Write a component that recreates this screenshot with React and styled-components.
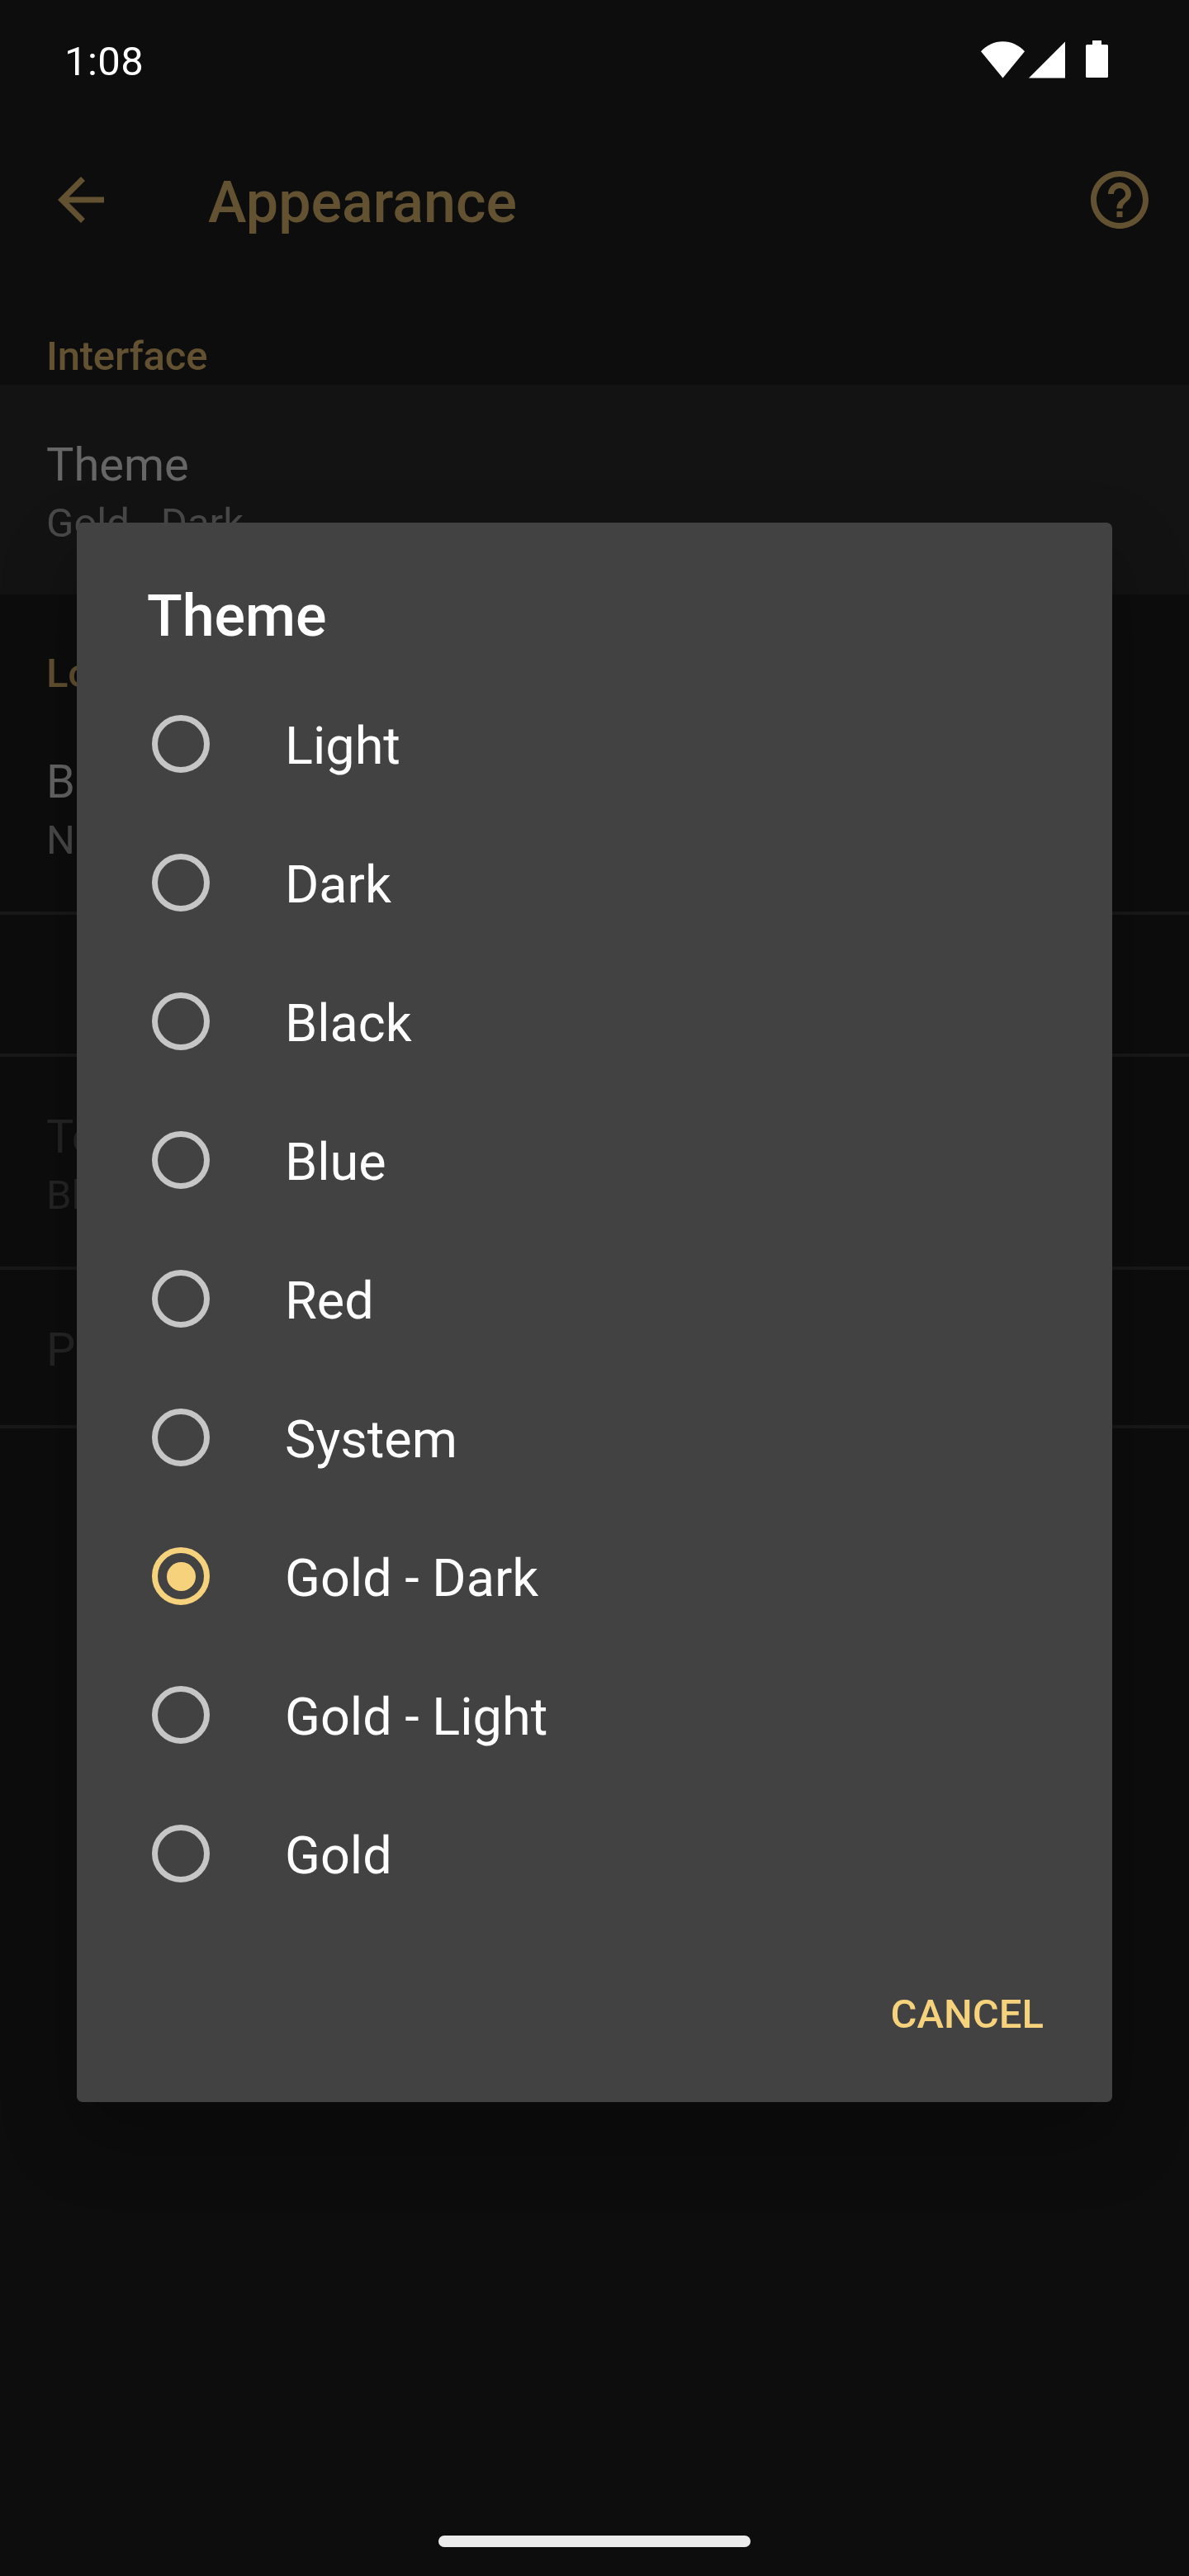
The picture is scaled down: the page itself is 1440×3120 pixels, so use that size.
import React, { useState } from "react";
import styled, { createGlobalStyle } from "styled-components";

const GlobalStyle = createGlobalStyle`
  * { box-sizing: border-box; }
  body { margin: 0; background: #0d0d0d; }
`;

const Screen = styled.div`
  position: relative;
  display: flex;
  flex-direction: column;
  width: 1440px;
  height: 3120px;
  overflow: hidden;
  background: #0d0d0d;
  font-family: Roboto, "Liberation Sans", sans-serif;
`;

const StatusBar = styled.header`
  display: flex;
  justify-content: space-between;
  height: 148px;
  padding: 46px 98px 0 78px;
`;

const Clock = styled.time`
  color: #fff;
  font-size: 49px;
  line-height: 57px;
  letter-spacing: 0.4px;
`;

const StatusIcons = styled.div`
  display: flex;
  align-items: flex-start;
  padding-top: 3px;
  svg { display: block; fill: #fff; }
  svg + svg { margin-left: 5px; }
  svg + svg:last-child { margin-left: 25px; }
`;

const AppBar = styled.div`
  display: flex;
  align-items: center;
  height: 188px;
  padding: 0 42px 0 56px;
  color: #635231;
  svg { display: block; fill: currentColor; }
`;

const AppTitle = styled.h1`
  flex: 1;
  margin: 0;
  padding: 6px 0 0 112px;
  font-size: 70px;
  font-weight: 500;
  line-height: 82px;
`;

const Preferences = styled.main`
  display: flex;
  flex: 1;
  flex-direction: column;
`;

const SectionHeader = styled.h2`
  height: 130px;
  margin: 0;
  padding: 67px 56px 0;
  color: #635231;
  font-size: 49px;
  font-weight: 500;
  line-height: 57px;
  letter-spacing: -0.2px;
`;

const Preference = styled.div`
  height: ${(p) => (p.$single ? 188 : 254)}px;
  padding: 64px 56px 0;
  background: ${(p) => (p.$pressed ? "#131313" : "transparent")};
  color: ${(p) => (p.$disabled ? "#252525" : "#666")};
`;

const PreferenceTitle = styled.div`
  font-size: 56px;
  line-height: 66px;
`;

const PreferenceSummary = styled.div`
  margin-top: 9px;
  color: ${(p) => (p.$disabled ? "#252525" : "#494949")};
  font-size: 49px;
  line-height: 57px;
`;

const Divider = styled.hr`
  width: 100%;
  height: 4px;
  margin: 0;
  border: 0;
  background: #191919;
`;

const Spacer = styled.div`
  height: 168px;
`;

const NavBar = styled.footer`
  display: flex;
  justify-content: center;
  height: 49px;
`;

const NavHandle = styled.div`
  width: 378px;
  height: 14px;
  border-radius: 7px;
  background: #ebebeb;
`;

const Dialog = styled.section`
  position: absolute;
  top: 633px;
  left: 93px;
  display: flex;
  flex-direction: column;
  width: 1254px;
  height: 1913px;
  padding-top: 72px;
  border-radius: 7px;
  background: #424242;
  box-shadow: 0 40px 90px rgba(0, 0, 0, 0.28);
`;

const DialogTitle = styled.h2`
  margin: 0 84px 30px 85px;
  color: #fff;
  font-size: 70px;
  font-weight: 500;
  line-height: 82px;
`;

const OptionList = styled.div`
  display: flex;
  flex-direction: column;
`;

const Option = styled.div`
  display: flex;
  align-items: center;
  gap: 91px;
  height: 168px;
  padding-left: 91px;
`;

const Radio = styled.span`
  display: flex;
  align-items: center;
  justify-content: center;
  width: 70px;
  height: 70px;
  border: 7px solid ${(p) => (p.$checked ? "#f6d27d" : "#c6c6c6")};
  border-radius: 50%;
`;

const RadioDot = styled.span`
  width: 35px;
  height: 35px;
  border-radius: 50%;
  background: #f6d27d;
`;

const OptionLabel = styled.span`
  padding-top: 5px;
  color: #fff;
  font-size: 63px;
  line-height: 73px;
`;

const DialogActions = styled.div`
  display: flex;
  justify-content: flex-end;
  padding: 82px 83px 0 0;
`;

const TextButton = styled.button`
  padding: 0;
  border: 0;
  background: none;
  color: #f6d27d;
  font-family: inherit;
  font-size: 49px;
  font-weight: 500;
  line-height: 57px;
`;

const themes = ["Light", "Dark", "Black", "Blue", "Red", "System", "Gold - Dark", "Gold - Light", "Gold"];

function WifiIcon() {
  return (
    <svg width="53" height="46" viewBox="0 0 53 46">
      <path d="M26.5 45.5 0 13.2C7 6 16 1.3 26.5 1.3S46 6 53 13.2Z" />
    </svg>
  );
}

function SignalIcon() {
  return (
    <svg width="44" height="46" viewBox="0 0 44 46">
      <path d="M0 45.6 44 1.5v44.1Z" />
    </svg>
  );
}

function BatteryIcon() {
  return (
    <svg width="27" height="46" viewBox="0 0 27 46">
      <path d="M8 0h11v5h6.5Q27 5 27 6.500V43.500Q27 45 25.500 45H1.500Q0 45 0 43.500V6.500Q0 5 1.500 5H8Z" />
    </svg>
  );
}

function BackIcon() {
  return (
    <svg width="84" height="84" viewBox="0 0 24 24">
      <path d="M20 11H7.830l5.590-5.590L12 4l-8 8 8 8 1.410-1.410L7.830 13H20v-2z" />
    </svg>
  );
}

function HelpIcon() {
  return (
    <svg width="84" height="84" viewBox="0 0 24 24">
      <path d="M11 18h2v-2h-2v2zm1-16C6.480 2 2 6.480 2 12s4.480 10 10 10 10-4.480 10-10S17.520 2 12 2zm0 18c-4.410 0-8-3.590-8-8s3.590-8 8-8 8 3.590 8 8-3.590 8-8 8zm0-14c-2.210 0-4 1.790-4 4h2c0-1.100.9-2 2-2s2 .9 2 2c0 2-3 1.750-3 5h2c0-2.250 3-2.500 3-5 0-2.210-1.790-4-4-4z" />
    </svg>
  );
}

export default function App() {
  const [selected, setSelected] = useState("Gold - Dark");

  return (
    <>
      <GlobalStyle />
      <Screen>
        <StatusBar>
          <Clock>1:08</Clock>
          <StatusIcons>
            <WifiIcon />
            <SignalIcon />
            <BatteryIcon />
          </StatusIcons>
        </StatusBar>
        <AppBar>
          <BackIcon />
          <AppTitle>Appearance</AppTitle>
          <HelpIcon />
        </AppBar>
        <Preferences>
          <SectionHeader>Interface</SectionHeader>
          <Preference $pressed>
            <PreferenceTitle>Theme</PreferenceTitle>
            <PreferenceSummary>Gold - Dark</PreferenceSummary>
          </Preference>
          <SectionHeader>Lock screen</SectionHeader>
          <Preference>
            <PreferenceTitle>Background</PreferenceTitle>
            <PreferenceSummary>None</PreferenceSummary>
          </Preference>
          <Divider />
          <Spacer />
          <Divider />
          <Preference $disabled>
            <PreferenceTitle>Text color</PreferenceTitle>
            <PreferenceSummary $disabled>Black</PreferenceSummary>
          </Preference>
          <Divider />
          <Preference $single $disabled>
            <PreferenceTitle>Preview</PreferenceTitle>
          </Preference>
          <Divider />
        </Preferences>
        <NavBar>
          <NavHandle />
        </NavBar>
        <Dialog role="dialog">
          <DialogTitle>Theme</DialogTitle>
          <OptionList role="radiogroup">
            {themes.map((name) => (
              <Option key={name} onClick={() => setSelected(name)}>
                <Radio $checked={name === selected}>{name === selected && <RadioDot />}</Radio>
                <OptionLabel>{name}</OptionLabel>
              </Option>
            ))}
          </OptionList>
          <DialogActions>
            <TextButton>CANCEL</TextButton>
          </DialogActions>
        </Dialog>
      </Screen>
    </>
  );
}
